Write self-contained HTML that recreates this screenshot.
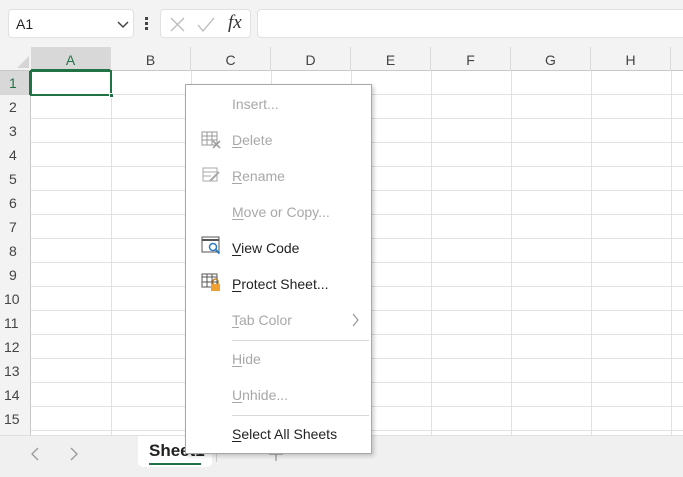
<!DOCTYPE html><html><head><style>
*{margin:0;padding:0;box-sizing:border-box}
body{width:683px;height:477px;overflow:hidden;background:#fff;font-family:"Liberation Sans",sans-serif;position:relative}
.top{position:absolute;left:0;top:0;width:683px;height:47px;background:#f3f3f3}
.box{position:absolute;background:#fff;border:1px solid #e1e1e1;border-radius:4px}
.ch{position:absolute;top:47px;height:24px;background:#f3f3f3;border-bottom:1px solid #c8c8c8}
.cl{position:absolute;top:47px;height:24px;font-size:14px;color:#444;text-align:center;line-height:26px;border-right:1px solid #dadada}
.rh{position:absolute;left:0;width:31px;height:24px;background:#f3f3f3;border-right:1px solid #c8c8c8;font-size:14px;color:#444;padding-left:9px;line-height:24px}
.hl{position:absolute;left:31px;width:652px;height:1px;background:#e1e1e1}
.vl{position:absolute;top:71px;height:364px;width:1px;background:#e1e1e1}
.menu{position:absolute;left:185px;top:84px;width:187px;height:370px;background:#fff;border:1px solid #a8a8a8;box-shadow:2px 2px 4px rgba(0,0,0,.2)}
.it{position:absolute;left:46px;font-size:14px;color:#222;line-height:18px;margin-top:-1px}
.dis{color:#a8a8a8}
.sep{position:absolute;left:46px;width:137px;height:1px;background:#d8d8d8}
u{text-decoration:underline;text-underline-offset:2px}
</style></head><body>
<div class="top"></div>
<div class="box" style="left:8px;top:9px;width:126px;height:29px"><span style="position:absolute;left:7px;top:6px;font-size:14px;color:#222">A1</span>
<svg style="position:absolute;left:108px;top:11px" width="12" height="8"><path d="M1 1l5 5 5-5" stroke="#444" stroke-width="1.5" fill="none"/></svg></div>
<div style="position:absolute;left:145px;top:17px;width:3px;height:3px;background:#444;box-shadow:0 5px 0 #444,0 10px 0 #444"></div>
<div class="box" style="left:160px;top:9px;width:91px;height:29px">
<svg style="position:absolute;left:8px;top:6px" width="80" height="18"><path d="M2 2l13 13M15 2L2 15" stroke="#bbb" stroke-width="1.3"/><path d="M29 9l5 6 11-13" stroke="#bbb" stroke-width="1.3" fill="none"/></svg>
<span style="position:absolute;left:67px;top:2px;font-family:'Liberation Serif',serif;font-style:italic;font-size:19px;color:#333">fx</span></div>
<div class="box" style="left:257px;top:9px;width:430px;height:29px"></div>
<div class="ch" style="left:0;width:683px"></div>
<div class="ch" style="left:31px;width:80px;background:#d8d8d8;border-bottom:2px solid #217346"></div>
<svg style="position:absolute;left:16px;top:55px" width="14" height="14"><path d="M13 1v12H1z" fill="#d5d5d5"/></svg>
<div class="cl" style="left:31px;width:80px;color:#217346">A</div>
<div class="cl" style="left:111px;width:80px">B</div>
<div class="cl" style="left:191px;width:80px">C</div>
<div class="cl" style="left:271px;width:80px">D</div>
<div class="cl" style="left:351px;width:80px">E</div>
<div class="cl" style="left:431px;width:80px">F</div>
<div class="cl" style="left:511px;width:80px">G</div>
<div class="cl" style="left:591px;width:80px">H</div>
<div class="rh" style="top:71px;background:#d8d8d8;color:#217346;border-right:2px solid #217346">1</div>
<div class="rh" style="top:95px">2</div><div class="rh" style="top:119px">3</div><div class="rh" style="top:143px">4</div><div class="rh" style="top:167px">5</div><div class="rh" style="top:191px">6</div><div class="rh" style="top:215px">7</div><div class="rh" style="top:239px">8</div><div class="rh" style="top:263px">9</div><div class="rh" style="top:287px;padding-left:4px">10</div><div class="rh" style="top:311px;padding-left:4px">11</div><div class="rh" style="top:335px;padding-left:4px">12</div><div class="rh" style="top:359px;padding-left:4px">13</div><div class="rh" style="top:383px;padding-left:4px">14</div><div class="rh" style="top:407px;padding-left:4px;height:28px">15</div>
<div class="hl" style="top:94px"></div><div class="hl" style="top:118px"></div><div class="hl" style="top:142px"></div><div class="hl" style="top:166px"></div><div class="hl" style="top:190px"></div><div class="hl" style="top:214px"></div><div class="hl" style="top:238px"></div><div class="hl" style="top:262px"></div><div class="hl" style="top:286px"></div><div class="hl" style="top:310px"></div><div class="hl" style="top:334px"></div><div class="hl" style="top:358px"></div><div class="hl" style="top:382px"></div><div class="hl" style="top:406px"></div><div class="hl" style="top:430px"></div>
<div class="vl" style="left:111px"></div><div class="vl" style="left:191px"></div><div class="vl" style="left:271px"></div><div class="vl" style="left:351px"></div><div class="vl" style="left:431px"></div><div class="vl" style="left:511px"></div><div class="vl" style="left:591px"></div><div class="vl" style="left:671px"></div>
<div style="position:absolute;left:30px;top:70px;width:82px;height:26px;border:2px solid #217346"></div>
<div style="position:absolute;left:109px;top:93px;width:5px;height:5px;background:#217346;border:1px solid #fff"></div>
<div style="position:absolute;left:0;top:435px;width:683px;height:42px;background:#f0f0f0;border-top:1px solid #e0e0e0"></div>
<svg style="position:absolute;left:28px;top:446px" width="60" height="16"><path d="M10 2L4 8l6 6M43 2l6 6-6 6" stroke="#999" stroke-width="1.3" fill="none"/></svg>
<div style="position:absolute;left:138px;top:436px;width:74px;height:31px;background:#fff;border-radius:0 0 5px 5px"></div>
<div style="position:absolute;left:149px;top:441px;font-size:17px;color:#222;font-weight:bold">Sheet1</div>
<div style="position:absolute;left:149px;top:463px;width:52px;height:2px;background:#217346"></div>
<div style="position:absolute;left:216px;top:442px;width:1px;height:20px;background:#ccc"></div>
<svg style="position:absolute;left:268px;top:446px" width="16" height="16"><path d="M8 1v14M1 8h14" stroke="#999" stroke-width="1.3"/></svg>
<div class="menu">
<div class="it dis" style="top:11px">Insert...</div>
<svg style="position:absolute;left:15px;top:46px" width="22" height="20"><rect x="1" y="1" width="15" height="13" fill="none" stroke="#999"/><path d="M1 5h15M1 9h15M6 1v13M11 1v13" stroke="#999"/><path d="M12 10l7 7M19 10l-7 7" stroke="#999" stroke-width="1.5"/></svg>
<div class="it dis" style="top:47px"><u>D</u>elete</div>
<svg style="position:absolute;left:16px;top:82px" width="20" height="20"><rect x="1" y="1" width="14" height="13" fill="none" stroke="#aaa"/><path d="M1 5h14M1 9h8" stroke="#aaa"/><path d="M8 14l9-9" stroke="#aaa" stroke-width="2"/></svg>
<div class="it dis" style="top:83px"><u>R</u>ename</div>
<div class="it dis" style="top:119px"><u>M</u>ove or Copy...</div>
<svg style="position:absolute;left:15px;top:151px" width="22" height="20"><rect x="1" y="1" width="17" height="15" fill="#fff" stroke="#555"/><path d="M1 4h17" stroke="#555" stroke-width="2"/><circle cx="12" cy="11" r="3.5" fill="none" stroke="#2b79c2" stroke-width="1.5"/><path d="M14.5 13.5l4 4" stroke="#2b79c2" stroke-width="2"/></svg>
<div class="it" style="top:155px"><u>V</u>iew Code</div>
<svg style="position:absolute;left:15px;top:188px" width="22" height="20"><rect x="1" y="1" width="15" height="13" fill="none" stroke="#555"/><path d="M1 4h15M1 9h15M6 1v13M11 1v13" stroke="#555"/><rect x="10" y="11" width="9" height="7" fill="#f0a030"/><path d="M12 11V8.5a2.5 2.5 0 015 0V11" fill="none" stroke="#c07010" stroke-width="1.3"/></svg>
<div class="it" style="top:191px"><u>P</u>rotect Sheet...</div>
<div class="it dis" style="top:227px"><u>T</u>ab Color</div>
<svg style="position:absolute;left:165px;top:228px" width="10" height="14"><path d="M2 1l5 6-5 6" stroke="#999" stroke-width="1.2" fill="none"/></svg>
<div class="sep" style="top:255px"></div>
<div class="it dis" style="top:266px"><u>H</u>ide</div>
<div class="it dis" style="top:302px"><u>U</u>nhide...</div>
<div class="sep" style="top:330px"></div>
<div class="it" style="top:341px"><u>S</u>elect All Sheets</div>
</div>
</body></html>
